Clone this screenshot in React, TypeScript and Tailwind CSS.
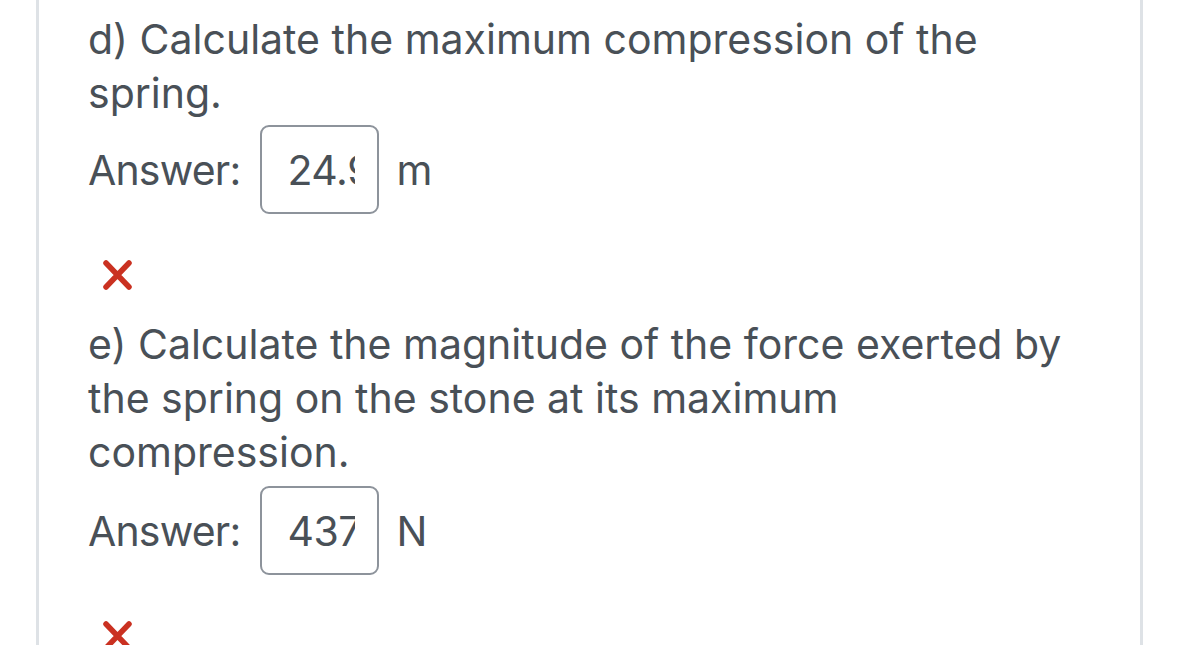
const TEXT = "text-[#495057]";

function WrongMark() {
	return (
		<svg width="31" height="32" viewBox="0 0 31 32" className="block">
			<path
				d="M4 4 L27 28 M27 4 L4 28"
				stroke="#ca3121"
				strokeWidth="5.5"
				strokeLinecap="round"
				fill="none"
			/>
		</svg>
	);
}

function AnswerRow({ value, unit }: { value: string; unit: string }) {
	return (
		<div className="flex items-center h-[89px]">
			<span className="mr-[20px] tracking-[-0.02em]">Answer:</span>
			<div className="w-[119px] h-[89px] border-2 border-[#8d939b] rounded-[9px] pl-[25px] pr-[22px] flex items-center">
				<div className="overflow-hidden whitespace-nowrap w-full tracking-[-0.01em]">
					{value}
				</div>
			</div>
			<span className="ml-[17px]">{unit}</span>
		</div>
	);
}

export default function App() {
	return (
		<div className="bg-white w-[1179px] h-[645px] overflow-hidden">
			<div
				className={`ml-[36px] w-[1107px] h-[645px] border-x-[3px] border-[#dee2e6] pl-[49px] pr-[49px] pt-[12px] text-[41px] leading-[54px] ${TEXT}`}
				style={{ fontFamily: "Inter, 'Liberation Sans', sans-serif" }}
			>
				<p>d) Calculate the maximum compression of the spring.</p>
				<div className="mt-[5px]">
					<AnswerRow value="24.95" unit="m" />
				</div>
				<div className="mt-[45px] ml-[14px]">
					<WrongMark />
				</div>
				<p className="mt-[26px]">
					e) Calculate the magnitude of the force exerted by the spring on the
					stone at its maximum compression.
				</p>
				<div className="mt-[7px]">
					<AnswerRow value="437.5" unit="N" />
				</div>
				<div className="mt-[45px] ml-[14px]">
					<WrongMark />
				</div>
			</div>
		</div>
	);
}
